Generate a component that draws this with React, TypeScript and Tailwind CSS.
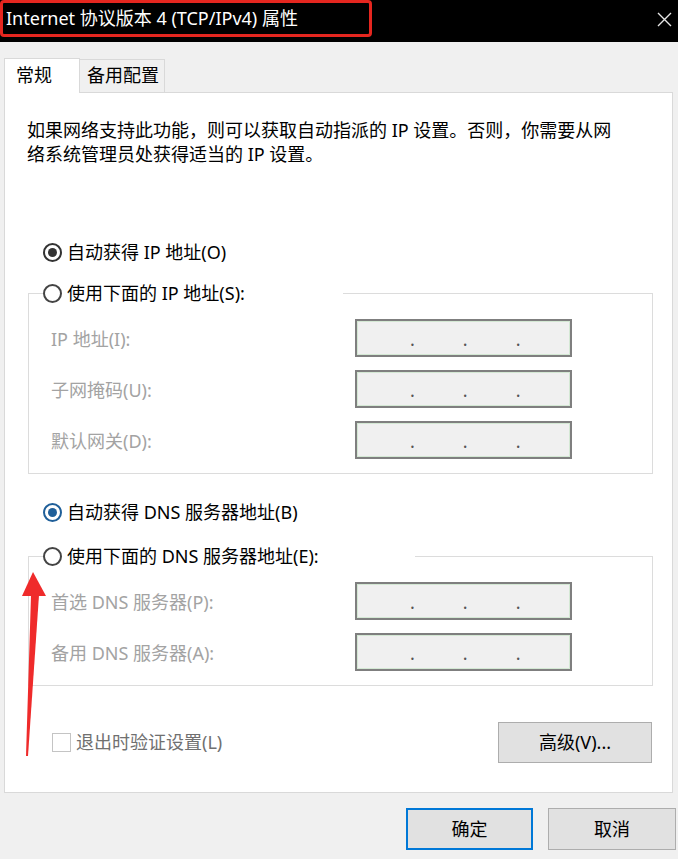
import React from 'react';

const font = { fontFamily: '"Noto Sans", "Noto Sans CJK SC", sans-serif' };

function Radio({ checked, color = 'dark' }: { checked?: boolean; color?: 'dark' | 'blue' }) {
  const ring = color === 'blue' ? 'border-[#1f5f99]' : 'border-[#333333]';
  const dot = color === 'blue' ? 'bg-[#1f5f99]' : 'bg-[#333333]';
  return (
    <span className={`w-[19px] h-[19px] rounded-full border-2 ${checked ? ring : 'border-[#444444]'} bg-white flex items-center justify-center shrink-0`}>
      {checked && <span className={`w-[9px] h-[9px] rounded-full ${dot}`} />}
    </span>
  );
}

function IpBox() {
  return (
    <div className="w-[217px] h-[38px] border-2 border-[#7f7f7f] bg-[#f0f0f0] shadow-[inset_0_0_0_1px_#d4e8d4] flex items-center text-[#555] text-[18px] leading-none">
      <span className="ml-[53px] mt-[2px]">.</span>
      <span className="ml-[48px] mt-[2px]">.</span>
      <span className="ml-[48px] mt-[2px]">.</span>
    </div>
  );
}

function FieldRow({ label }: { label: string }) {
  return (
    <div className="flex items-center h-[38px]">
      <span className="w-[304px] text-[#a3a3a3] pt-[2px]">{label}</span>
      <IpBox />
    </div>
  );
}

function Group({ legend, legendWidth, rows }: { legend: string; legendWidth: string; rows: string[] }) {
  return (
    <fieldset className="ml-[23px] w-[625px] border border-[#dcdcdc] px-[22px] pt-[14px] pb-[14px]">
      <legend className={`ml-[-8px] ${legendWidth} h-[24px] flex items-center gap-[5px]`}>
        <Radio />
        <span>{legend}</span>
      </legend>
      <div className="flex flex-col gap-[13px]">
        {rows.map((r) => (
          <FieldRow key={r} label={r} />
        ))}
      </div>
    </fieldset>
  );
}

export default function App() {
  return (
    <div className="w-[678px] h-[859px] bg-[#f0f0f0] relative overflow-hidden text-[18px] text-black" style={font}>
      {/* Title bar */}
      <div className="h-[42px] bg-black flex items-start justify-between">
        <div className="w-[372px] h-[37px] border-[3px] border-[#e5261f] rounded-[4px] flex items-center pl-[3px] text-white text-[18px]">
          Internet 协议版本 4 (TCP/IPv4) 属性
        </div>
        <svg className="mt-[12px] mr-[6px]" width="15" height="15" viewBox="0 0 15 15">
          <path d="M1 1 L14 14 M14 1 L1 14" stroke="#e6e6e6" strokeWidth="1.4" />
        </svg>
      </div>

      {/* Tabs */}
      <div className="flex items-end pl-[4px] mt-[15px] h-[35px]">
        <div className="w-[76px] h-[35px] bg-white border border-b-0 border-[#d9d9d9] pl-[11px] pt-[3px] relative z-10 -mb-px">常规</div>
        <div className="w-[85px] h-[33px] bg-[#f0f0f0] border border-b-0 border-l-0 border-[#d9d9d9] pl-[7px] pt-[2px]">备用配置</div>
      </div>

      {/* Panel */}
      <div className="ml-[4px] w-[669px] h-[701px] bg-white border border-[#d9d9d9]">
        <p className="pl-[22px] pt-[25px] leading-[24px]">
          如果网络支持此功能，则可以获取自动指派的 IP 设置。否则，你需要从网
          <br />
          络系统管理员处获得适当的 IP 设置。
        </p>

        <div className="mt-[74px] ml-[38px] h-[24px] flex items-center gap-[5px]">
          <Radio checked />
          <span>自动获得 IP 地址(O)</span>
        </div>

        <div className="mt-[17px]">
          <Group legend="使用下面的 IP 地址(S):" legendWidth="w-[300px]" rows={['IP 地址(I):', '子网掩码(U):', '默认网关(D):']} />
        </div>

        <div className="mt-[26px] ml-[38px] h-[24px] flex items-center gap-[5px]">
          <Radio checked color="blue" />
          <span>自动获得 DNS 服务器地址(B)</span>
        </div>

        <div className="mt-[20px]">
          <Group legend="使用下面的 DNS 服务器地址(E):" legendWidth="w-[372px]" rows={['首选 DNS 服务器(P):', '备用 DNS 服务器(A):']} />
        </div>

        <div className="mt-[36px] pl-[47px] pr-[20px] h-[41px] flex items-center justify-between">
          <div className="flex items-center gap-[5px] text-[#707070]">
            <span className="w-[19px] h-[19px] border border-[#c4c4c4] bg-white" />
            <span>退出时验证设置(L)</span>
          </div>
          <button className="w-[154px] h-[41px] bg-[#e1e1e1] border border-[#adadad] text-black">高级(V)...</button>
        </div>
      </div>

      {/* Bottom buttons */}
      <div className="mt-[15px] pr-[2px] flex justify-end gap-[15px]">
        <button className="w-[127px] h-[42px] bg-[#e1e1e1] border-2 border-[#0078d7]">确定</button>
        <button className="w-[128px] h-[42px] bg-[#e1e1e1] border border-[#adadad]">取消</button>
      </div>

      {/* Red annotation arrow */}
      <svg className="absolute left-0 top-0 pointer-events-none" width="678" height="859" viewBox="0 0 678 859">
        <polygon points="33,572 22,596 46,596" fill="#ef2b2b" />
        <polygon points="31,595 39,595 28,756 26,756" fill="#ef2b2b" />
      </svg>
    </div>
  );
}
